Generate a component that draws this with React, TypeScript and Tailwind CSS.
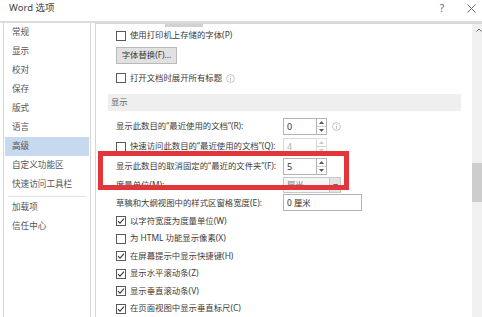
import React from "react";

const font = { fontFamily: '"Noto Sans", "Noto Sans CJK SC", sans-serif' };

function Check({ checked }: { checked?: boolean }) {
  return (
    <div className="w-[10px] h-[10px] border border-[#5a5a5a] bg-white flex items-center justify-center shrink-0">
      {checked && (
        <svg width="8" height="8" viewBox="0 0 8 8">
          <path d="M1 4.2 L3 6.2 L7 1.6" stroke="#3a3a3a" strokeWidth="1.1" fill="none" />
        </svg>
      )}
    </div>
  );
}

function Info() {
  return (
    <svg width="9" height="9" viewBox="0 0 9 9" className="shrink-0">
      <circle cx="4.5" cy="4.5" r="3.9" stroke="#b5b5b5" strokeWidth="0.8" fill="none" />
      <path d="M4.5 4 V6.8" stroke="#b5b5b5" strokeWidth="0.9" />
      <circle cx="4.5" cy="2.6" r="0.5" fill="#b5b5b5" />
    </svg>
  );
}

function Spin({ value, dim }: { value: string; dim?: boolean }) {
  const c = dim ? "#c8c8c8" : "#5a5a5a";
  return (
    <div className="flex h-[17px] shrink-0 bg-white">
      <div
        className={`w-[34px] h-full border bg-white pl-[3px] text-[9px] leading-[15px] ${
          dim ? "border-[#d8d8d8] text-[#b0b0b0]" : "border-[#b4b4b4] text-[#333]"
        }`}
      >
        {value}
      </div>
      <div className={`w-[10px] h-full border-y border-r flex flex-col ${dim ? "border-[#e0e0e0]" : "border-[#b4b4b4]"}`}>
        <div className="flex-1 flex items-center justify-center border-b border-[#d0d0d0]">
          <svg width="5" height="3" viewBox="0 0 5 3">
            <path d="M0 3 L2.5 0 L5 3 Z" fill={c} />
          </svg>
        </div>
        <div className="flex-1 flex items-center justify-center">
          <svg width="5" height="3" viewBox="0 0 5 3">
            <path d="M0 0 L2.5 3 L5 0 Z" fill={c} />
          </svg>
        </div>
      </div>
    </div>
  );
}

const navTop = ["常规", "显示", "校对", "保存", "版式", "语言", "高级", "自定义功能区", "快速访问工具栏"];
const navBottom = ["加载项", "信任中心"];

export default function App() {
  return (
    <div className="relative w-[482px] h-[317px] overflow-hidden bg-white text-[#444]" style={font}>
      {/* title bar */}
      <div className="h-[21px] flex items-center justify-between pl-[9px] pr-[6px] bg-white">
        <span className="text-[9.5px] text-[#444] leading-none -mt-[6px] whitespace-nowrap">Word 选项</span>
        <div className="flex items-center gap-[23px] -mt-[5px]">
          <span className="text-[10px] text-[#666] leading-none">?</span>
          <svg width="9" height="9" viewBox="0 0 9 9">
            <path d="M0.5 0.5 L8.5 8.5 M8.5 0.5 L0.5 8.5" stroke="#666" strokeWidth="1" />
          </svg>
        </div>
      </div>
      <div className="h-[2px] bg-[#dcdcdc]" />

      {/* body */}
      <div className="flex h-[294px]">
        {/* left nav */}
        <div className="ml-[3px] w-[88px] border-x border-[#d6d6d6] flex flex-col text-[8.6px] text-[#555]">
          {navTop.map((n) => (
            <div
              key={n}
              className={`h-[19px] flex items-center whitespace-nowrap ${
                n === "高级" ? "bg-[#c6d9ee] mx-[1px] pl-[7px]" : "pl-[8px]"
              }`}
            >
              {n}
            </div>
          ))}
          <div className="h-[2px]" />
          <div className="h-[1px] bg-[#e2e2e2] mx-[4px]" />
          <div className="h-[1px]" />
          {navBottom.map((n) => (
            <div key={n} className="h-[19px] flex items-center pl-[8px] whitespace-nowrap">
              {n}
            </div>
          ))}
        </div>

        {/* right panel */}
        <div className="ml-[4px] flex-1 border-l border-t border-[#d6d6d6] flex">
          <div className="flex-1 flex flex-col text-[8.4px] text-[#3c3c3c] whitespace-nowrap">
            <div className="h-[3px] flex">
              <div className="ml-[69px] w-[38px] h-[3px] bg-[#d2d2d2]" />
            </div>
            <div className="h-[18px] flex items-center gap-[4px] pl-[20px]">
              <Check />
              <span>使用打印机上存储的字体(P)</span>
            </div>
            <div className="mt-[3px] pl-[20px]">
              <div className="w-[61px] h-[17px] bg-[#e1e1e1] border border-[#b9b9b9] flex items-center justify-center">
                字体替换(F)...
              </div>
            </div>
            <div className="mt-[5px] h-[19px] flex items-center gap-[4px] pl-[20px]">
              <Check />
              <span>打开文档时展开所有标题</span>
              <Info />
            </div>
            <div className="mt-[7px] ml-[12px] mr-[11px] h-[17px] bg-[#efefef] flex items-center pl-[3px] text-[#666]">
              显示
            </div>

            {/* R */}
            <div className="mt-[6px] h-[21px] flex items-center pl-[20px]">
              <span className="w-[167px] shrink-0">显示此数目的“最近使用的文档”(R):</span>
              <Spin value="0" />
              <div className="ml-[5px]">
                <Info />
              </div>
            </div>
            {/* Q */}
            <div className="h-[21px] flex items-center pl-[20px]">
              <div className="w-[167px] shrink-0 flex items-center gap-[4px]">
                <Check />
                <span>快速访问此数目的“最近使用的文档”(Q):</span>
              </div>
              <Spin value="4" dim />
            </div>
            {/* F */}
            <div className="h-[21px] flex items-center pl-[20px]">
              <span className="w-[167px] shrink-0">显示此数目的取消固定的“最近的文件夹”(F):</span>
              <Spin value="5" />
            </div>
            {/* M */}
            <div className="h-[18px] flex items-center pl-[20px]">
              <span className="w-[167px] shrink-0">度量单位(M):</span>
              <div className="w-[58px] h-[16px] border border-[#c8c8c8] bg-[#f7f7f7] flex">
                <span className="flex-1 pl-[3px] leading-[14px] text-[#777]">厘米</span>
                <div className="w-[11px] bg-[#e3e3e3] border-l border-[#c8c8c8] flex items-center justify-center">
                  <svg width="5" height="3" viewBox="0 0 5 3">
                    <path d="M0 0 L2.5 3 L5 0 Z" fill="#666" />
                  </svg>
                </div>
              </div>
            </div>
            {/* E */}
            <div className="h-[19px] flex items-center pl-[20px]">
              <span className="w-[167px] shrink-0">草稿和大纲视图中的样式区窗格宽度(E):</span>
              <div className="w-[79px] h-[17px] border border-[#b4b4b4] bg-white pl-[3px] leading-[15px] text-[#333]">
                0 厘米
              </div>
            </div>

            {[
              ["以字符宽度为度量单位(W)", true, 18],
              ["为 HTML 功能显示像素(X)", false, 17],
              ["在屏幕提示中显示快捷键(H)", true, 18],
              ["显示水平滚动条(Z)", true, 17],
              ["显示垂直滚动条(V)", true, 18],
              ["在页面视图中显示垂直标尺(C)", true, 17],
            ].map(([t, c, h]) => (
              <div
                key={t as string}
                className={`${h === 18 ? "h-[18px]" : "h-[17px]"} shrink-0 flex items-center gap-[4px] pl-[20px]`}
              >
                <Check checked={c as boolean} />
                <span>{t as string}</span>
              </div>
            ))}
          </div>

          {/* scrollbar */}
          <div className="w-[10px] bg-[#f0f0f0] flex flex-col">
            <div className="h-[12px] flex items-center justify-center pl-[3px]">
              <svg width="6" height="4" viewBox="0 0 6 4">
                <path d="M0.5 3.5 L3 1 L5.5 3.5" stroke="#666" strokeWidth="1" fill="none" />
              </svg>
            </div>
            <div className="mt-[127px] h-[39px] bg-[#cdcdcd]" />
          </div>
        </div>
      </div>

      {/* red highlight box */}
      <div className="absolute left-[98px] top-[151px] w-[251px] h-[39px] border-[5px] border-[#e3363b]" />
    </div>
  );
}
